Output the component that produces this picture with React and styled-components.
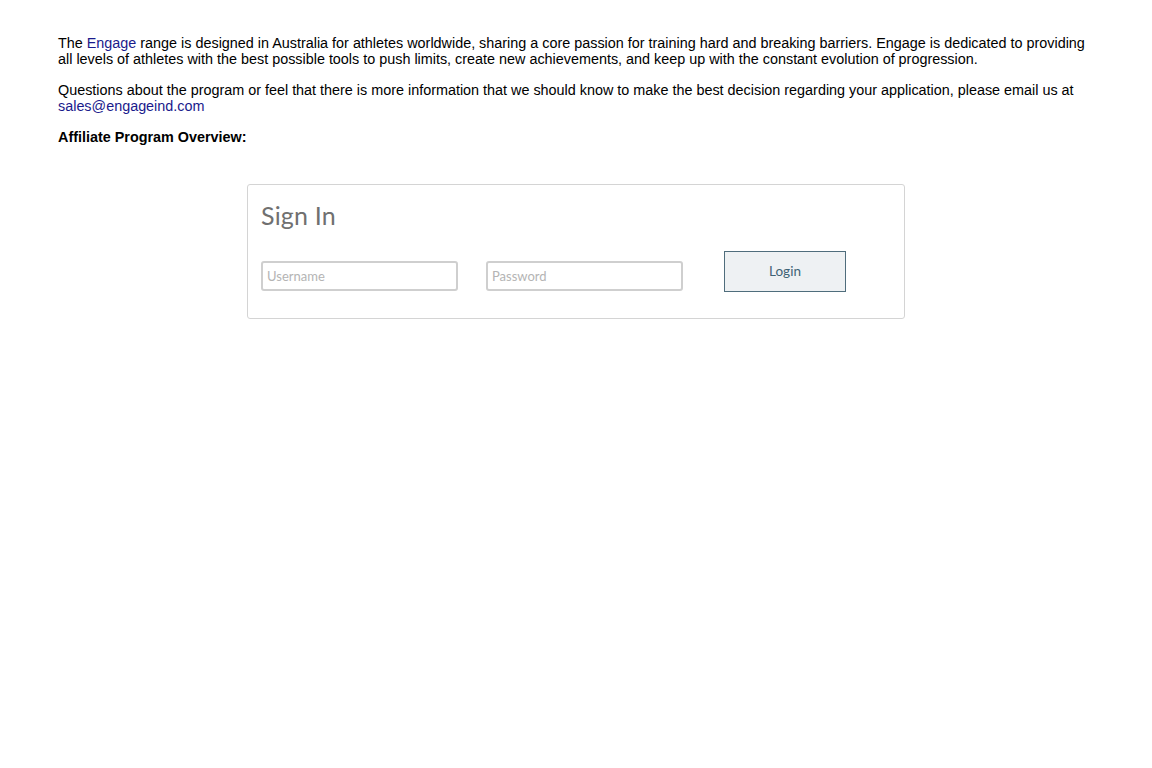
import React from "react";
import styled, { createGlobalStyle } from "styled-components";

const Global = createGlobalStyle`
  html, body { margin: 0; padding: 0; background: #fff; }
  body { font-family: "Liberation Sans", Arial, sans-serif; color: #000; }
`;

const Page = styled.div`
  padding: 35px 58px 0 58px;
  width: 1036px;
`;

const Para = styled.p`
  margin: 0 0 15px 0;
  font-size: 14.38px;
  line-height: 16px;
`;

const Link = styled.a`
  color: #1a1a8c;
  text-decoration: none;
`;

const Heading = styled.p`
  margin: 0;
  font-size: 14.38px;
  line-height: 16px;
  font-weight: bold;
`;

const Card = styled.div`
  box-sizing: border-box;
  width: 658px;
  height: 135px;
  margin: 39px auto 0 auto;
  border: 1px solid #d4d4d4;
  border-radius: 3px;
  padding: 13px 14px 0 13px;
  font-family: Lato, "Open Sans", sans-serif;
`;

const Title = styled.h2`
  margin: 0;
  font-weight: 400;
  font-size: 25px;
  line-height: 34px;
  color: #707070;
  letter-spacing: 0.2px;
`;

const Row = styled.div`
  display: flex;
  align-items: flex-end;
  margin-top: 19px;
`;

const Input = styled.input`
  box-sizing: border-box;
  width: 197px;
  height: 30px;
  border: 2px solid #cfcfcf;
  border-radius: 3px;
  padding: 0 4px;
  margin-right: ${(p) => p.$gap}px;
  margin-bottom: 1px;
  font-family: Lato, "Open Sans", sans-serif;
  font-size: 13px;
  outline: none;
  &::placeholder { color: #b4b4b4; }
`;

const Button = styled.button`
  box-sizing: border-box;
  width: 122px;
  height: 41px;
  background: #eef1f3;
  border: 1px solid #4f6d7c;
  color: #3f6375;
  font-family: Lato, "Open Sans", sans-serif;
  font-size: 13.5px;
  padding: 0 0 2px 0;
  cursor: pointer;
`;

export default function App() {
  return (
    <>
      <Global />
      <Page>
        <Para>
          The <Link href="#">Engage</Link> range is designed in Australia for athletes worldwide, sharing a core passion for training hard and breaking barriers. Engage is dedicated to providing all levels of athletes with the best possible tools to push limits, create new achievements, and keep up with the constant evolution of progression.
        </Para>
        <Para>
          Questions about the program or feel that there is more information that we should know to make the best decision regarding your application, please email us at{" "}
          <Link href="#">sales@engageind.com</Link>
        </Para>
        <Heading>Affiliate Program Overview:</Heading>
        <Card>
          <Title>Sign In</Title>
          <Row>
            <Input $gap={28} placeholder="Username" />
            <Input $gap={41} type="password" placeholder="Password" />
            <Button>Login</Button>
          </Row>
        </Card>
      </Page>
    </>
  );
}
